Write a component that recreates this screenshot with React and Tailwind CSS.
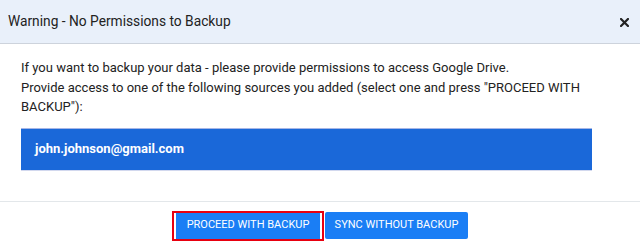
export default function App() {
  return (
    <div className="w-[640px] h-[252px] bg-white overflow-hidden" style={{ fontFamily: 'Roboto, "Liberation Sans", sans-serif' }}>
      <div className="h-[44px] bg-[#e9f0fa] border-b border-[#cdd3dc] flex items-center justify-between pl-[8px] pr-[11px]">
        <div className="text-[13.75px] text-[#222]">Warning - No Permissions to Backup</div>
        <svg width="9" height="9" viewBox="0 0 9 9" className="mt-[1px]">
          <path d="M1 1L8 8M8 1L1 8" stroke="#222" strokeWidth="2.2" strokeLinecap="square" />
        </svg>
      </div>
      <div className="pt-[14px] px-[21px] pr-[48px]">
        <div className="text-[13px] leading-[19.5px] text-[#222]">
          <div>If you want to backup your data - please provide permissions to access Google Drive.</div>
          <div>Provide access to one of the following sources you added (select one and press "PROCEED WITH BACKUP"):</div>
        </div>
        <div className="mt-[11px] h-[43px] bg-[#1a68d9] border-t border-b border-t-[#a6b6e6] border-b-[#d2d8ee] flex items-center pl-[14px] text-white font-bold text-[13px]">
          john.johnson@gmail.com
        </div>
      </div>
      <div className="mt-[30px] border-t border-[#e3e7ea] flex justify-center pt-[9px]">
        <div className="flex items-center">
          <div className="border-2 border-[#e8000f] px-[2px] flex">
            <button className="h-[26px] w-[144px] bg-[#1a7ef5] text-white text-[11px] whitespace-nowrap">PROCEED WITH BACKUP</button>
          </div>
          <button className="ml-[1px] h-[27px] w-[143px] bg-[#1a7ef5] text-white text-[11px] whitespace-nowrap rounded-[2px]">SYNC WITHOUT BACKUP</button>
        </div>
      </div>
    </div>
  );
}
